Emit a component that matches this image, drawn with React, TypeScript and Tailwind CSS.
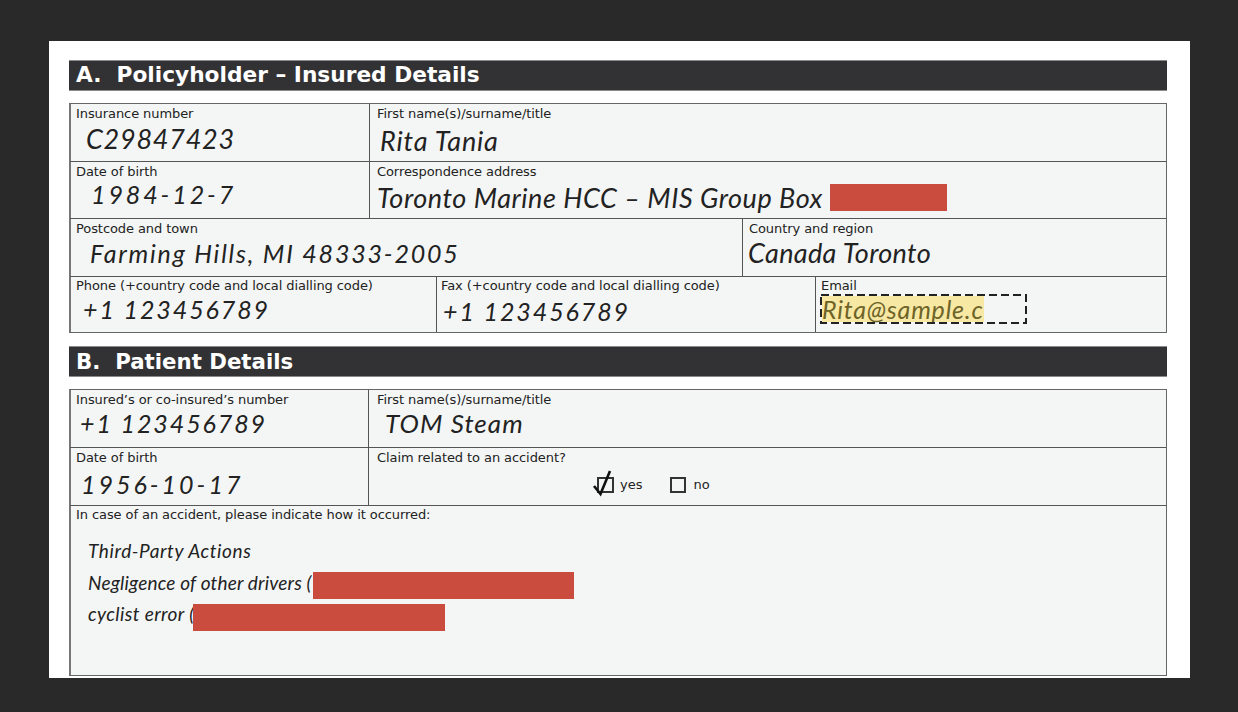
type FieldProps = {
  label: string;
  value?: string;
  width: string;
  valueClass?: string;
  pad?: string;
  last?: boolean;
};

const hand = "font-['Lato',sans-serif] italic text-[#222]";
const labelText = "text-[13px] leading-[16px] tracking-[-0.08px] text-[#222]";
const tableBox = "border border-[#666] border-l-[#777] shadow-[inset_1px_0_0_#777] bg-[#f4f6f5] flex flex-col";

function SectionBar({ title, size }: { title: string; size: string }) {
  return (
    <div className={`h-[31px] bg-[#323234] border-y border-[#8a8a8a] pl-[7px] flex items-center font-['DejaVu_Sans',sans-serif] font-bold text-white whitespace-pre ${size}`}>
      {title}
    </div>
  );
}

function Field({ label, value, width, valueClass, last, pad = "pl-[6px] pt-[2px]" }: FieldProps) {
  return (
    <div className={`${width} ${pad} ${last ? "" : "border-r border-[#555]"} min-w-0`}>
      <p className={labelText}>{label}</p>
      {value ? <p className={`${hand} whitespace-nowrap ${valueClass}`}>{value}</p> : null}
    </div>
  );
}

function Redaction({ className }: { className: string }) {
  return <span className={`block shrink-0 bg-[#c94c3f] ${className}`} />;
}

export default function App() {
  return (
    <div className="min-h-[712px] bg-[#292929] pl-[49px] pt-[41px] font-['DejaVu_Sans',sans-serif]">
      <div className="w-[1141px] h-[637px] bg-white pl-[20px] pr-[23px] pt-[19px]">
        <SectionBar title="A.  Policyholder – Insured Details" size="text-[21.7px]" />

        <div className={`mt-[12px] h-[230px] ${tableBox}`}>
          <div className="h-[58px] flex border-b border-[#555]">
            <Field width="w-[300px]" label="Insurance number" value="C29847423" valueClass="text-[27px] leading-[32px] pl-[10px] mt-[1px] tracking-[0.75px]" />
            <Field width="flex-1" pad="pl-[7px] pt-[2px]" last label="First name(s)/surname/title" value="Rita Tania" valueClass="text-[27px] leading-[32px] pl-[3px] mt-[3px] tracking-[0.85px]" />
          </div>
          <div className="h-[57px] flex border-b border-[#555]">
            <Field width="w-[300px]" label="Date of birth" value="1984-12-7" valueClass="text-[25px] leading-[30px] pl-[15px] -mt-[1px] tracking-[2.9px]" />
            <div className="flex-1 pl-[7px] pt-[2px]">
              <p className={labelText}>Correspondence address</p>
              <div className="flex mt-[4px]">
                <p className={`${hand} text-[27px] leading-[28px] tracking-[0.55px] whitespace-nowrap`}>Toronto Marine HCC – MIS Group Box</p>
                <Redaction className="w-[117px] h-[27px] ml-[7px]" />
              </div>
            </div>
          </div>
          <div className="h-[58px] flex border-b border-[#555]">
            <Field width="w-[673px]" label="Postcode and town" value="Farming Hills, MI 48333-2005" valueClass="text-[25px] leading-[30px] pl-[14px] mt-[1px] tracking-[1.8px]" />
            <Field width="flex-1" last label="Country and region" value="Canada Toronto" valueClass="text-[27px] leading-[32px] -ml-[1px] tracking-[0.35px]" />
          </div>
          <div className="flex-1 flex">
            <Field width="w-[367px]" pad="pl-[6px] pt-[1px]" label="Phone (+country code and local dialling code)" value="+1 123456789" valueClass="text-[25px] leading-[30px] pl-[7px] tracking-[1.9px]" />
            <Field width="w-[379px]" pad="pl-[4px] pt-[1px]" label="Fax (+country code and local dialling code)" value="+1 123456789" valueClass="text-[25px] leading-[30px] pl-[2px] mt-[2px] tracking-[1.9px]" />
            <div className="flex-1 pl-[5px] pt-[1px]">
              <p className={labelText}>Email</p>
              <div className="relative w-[207px] h-[30px] -ml-[1px] pl-[2px] pt-[2px]">
                <p className="w-[162px] h-[26px] bg-[#f7e8a4] font-['Lato',sans-serif] italic text-[25px] leading-[26px] tracking-[0.8px] text-[#6e6428] whitespace-nowrap">Rita@sample.c</p>
                <svg className="absolute left-0 top-0" width="207" height="30" fill="none">
                  <rect x="1" y="1" width="205" height="28" stroke="#222" strokeWidth="2" strokeDasharray="8 4" />
                </svg>
              </div>
            </div>
          </div>
        </div>

        <div className="mt-[13px]">
          <SectionBar title="B.  Patient Details" size="text-[21.3px]" />
        </div>

        <div className={`mt-[12px] h-[287px] ${tableBox}`}>
          <div className="h-[58px] flex border-b border-[#555]">
            <Field width="w-[299px]" label="Insured’s or co-insured’s number" value="+1 123456789" valueClass="text-[25px] leading-[30px] pl-[4px] tracking-[1.9px]" />
            <Field width="flex-1" pad="pl-[8px] pt-[2px]" last label="First name(s)/surname/title" value="TOM Steam" valueClass="text-[26px] leading-[30px] pl-[8px] tracking-[1.05px]" />
          </div>
          <div className="h-[58px] flex border-b border-[#555]">
            <Field width="w-[299px]" label="Date of birth" value="1956-10-17" valueClass="text-[25px] leading-[30px] pl-[5px] mt-[3px] tracking-[3px]" />
            <div className="flex-1 pl-[8px] pt-[2px]">
              <p className={labelText}>Claim related to an accident?</p>
              <div className="flex items-center h-[16px] mt-[11px] ml-[220px] text-[13px] text-[#222]">
                <span className="relative w-[17px] h-[16px] border-2 border-[#333]">
                  <svg className="absolute -left-[6px] -top-[10px] overflow-visible" width="24" height="28" viewBox="0 0 24 28" fill="none">
                    <path d="M1 17 L7.5 25 L17 2" stroke="#111" strokeWidth="2.6" />
                  </svg>
                </span>
                <span className="ml-[6px]">yes</span>
                <span className="ml-[28px] w-[16px] h-[16px] border-2 border-[#333]" />
                <span className="ml-[7px]">no</span>
              </div>
            </div>
          </div>
          <div className="flex-1 pl-[6px] pt-[1px]">
            <p className={labelText}>In case of an accident, please indicate how it occurred:</p>
            <div className={`${hand} text-[19px] leading-[27px] pl-[12px] mt-[14px] flex flex-col gap-[5px]`}>
              <p className="tracking-[0.6px]">Third-Party Actions</p>
              <div className="flex">
                <span className="w-[225px] tracking-[0.17px] whitespace-nowrap">Negligence of other drivers (</span>
                <Redaction className="w-[261px] h-[27px] mt-[3px]" />
              </div>
              <div className="flex -mt-[3px]">
                <span className="w-[105px] -mt-[1px] tracking-[0.4px] whitespace-nowrap">cyclist error (</span>
                <Redaction className="w-[252px] h-[27px] mt-[3px]" />
              </div>
            </div>
          </div>
        </div>
      </div>
    </div>
  );
}
